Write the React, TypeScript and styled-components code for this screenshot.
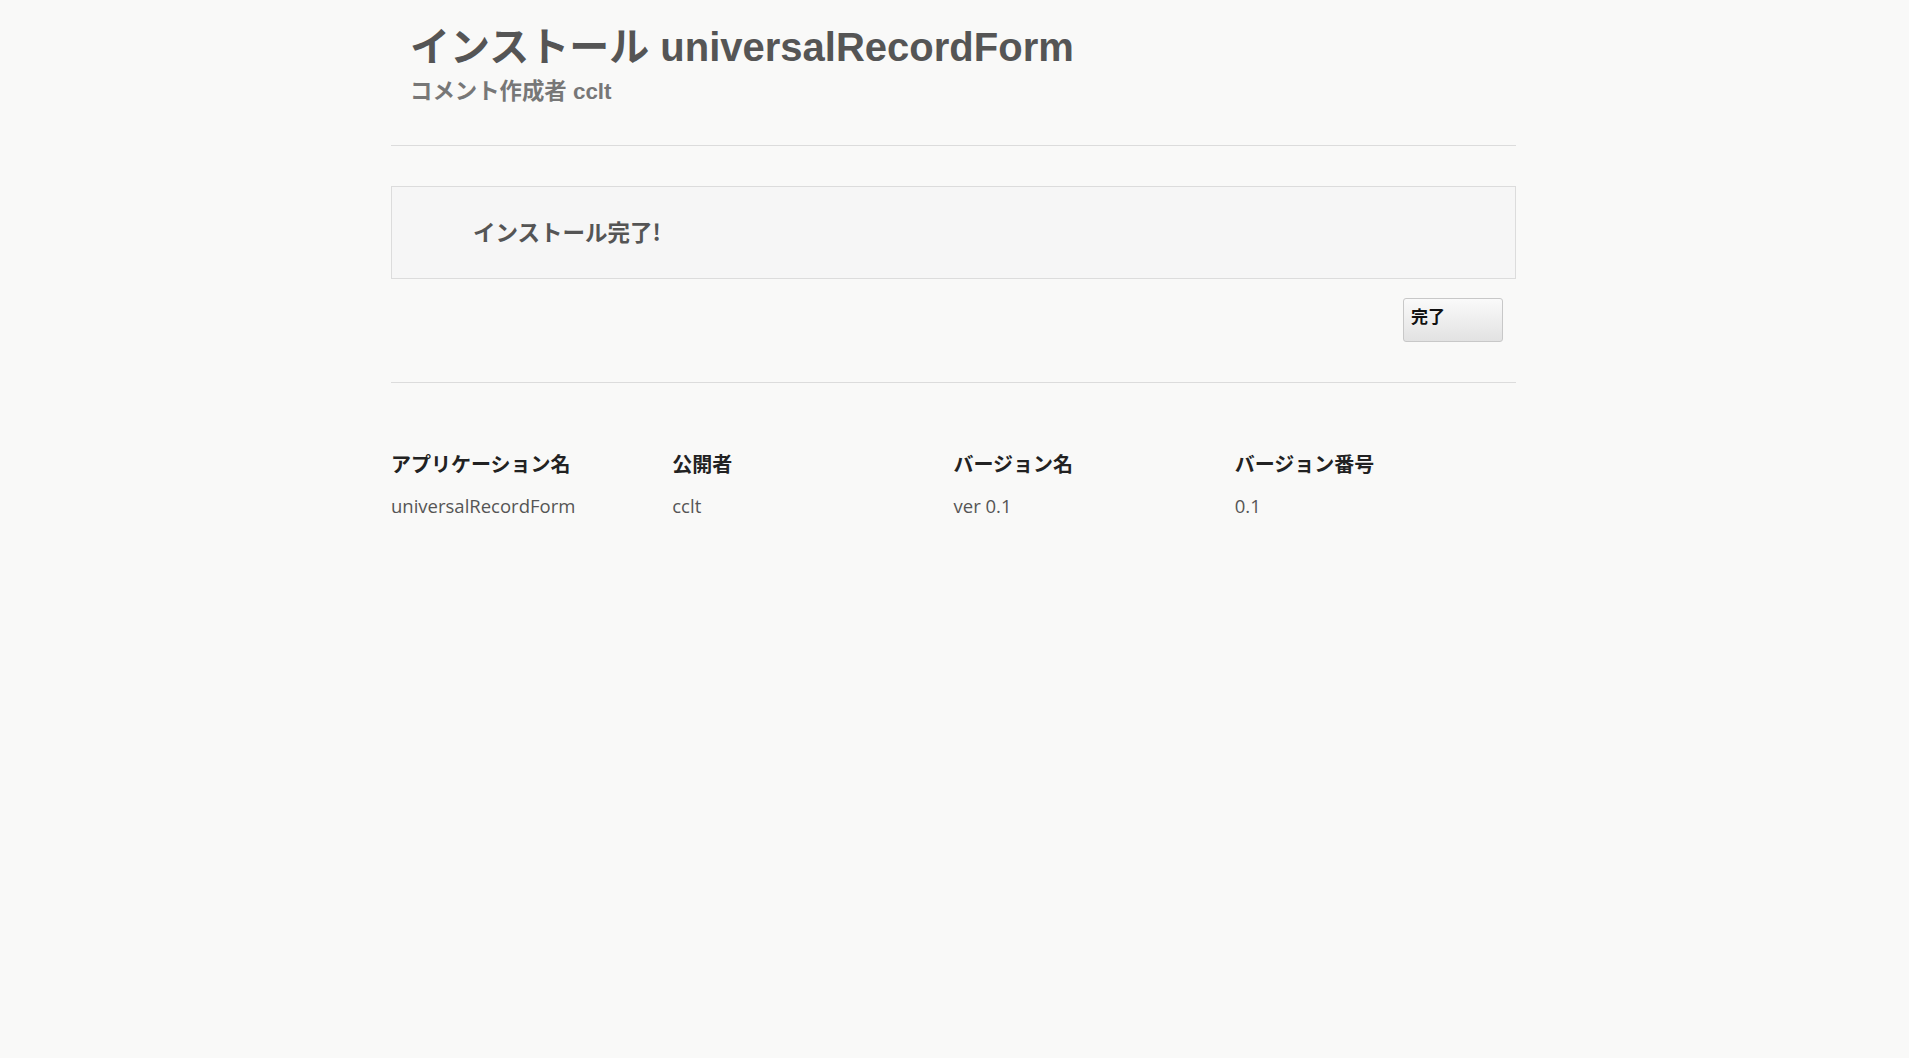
import styled, { createGlobalStyle } from 'styled-components';

const GlobalStyle = createGlobalStyle`
  html, body {
    margin: 0;
    padding: 0;
    background: #f9f9f8;
  }
  body {
    font-family: 'Liberation Sans', Arial, 'Noto Sans CJK JP', sans-serif;
    color: #555;
  }
`;

const columns = [
  { label: 'アプリケーション名', value: 'universalRecordForm' },
  { label: '公開者', value: 'cclt' },
  { label: 'バージョン名', value: 'ver 0.1' },
  { label: 'バージョン番号', value: '0.1' },
];

const App = () => {
  return (
    <Page>
      <GlobalStyle />
      <Container>
        <Header>
          <Title>インストール universalRecordForm</Title>
          <Subtitle>コメント作成者 cclt</Subtitle>
        </Header>
        <Rule />
        <Notice>
          <NoticeText>インストール完了!</NoticeText>
        </Notice>
        <Actions>
          <DoneButton>完了</DoneButton>
        </Actions>
        <Rule />
        <InfoTable>
          {columns.map(col => (
            <Column key={col.label}>
              <ColumnLabel>{col.label}</ColumnLabel>
              <ColumnValue>{col.value}</ColumnValue>
            </Column>
          ))}
        </InfoTable>
      </Container>
    </Page>
  );
};

const Page = styled.div`
  min-height: 1058px;
  background: #f9f9f8;
  padding-right: 2px;
`;

const Container = styled.div`
  width: 1125px;
  margin: 0 auto;
  display: flex;
  flex-direction: column;
`;

const Header = styled.div`
  padding: 23px 19px 0;
  height: 145px;
  box-sizing: border-box;
  display: flex;
  flex-direction: column;
`;

const Title = styled.h1`
  margin: 0;
  font-size: 40px;
  line-height: 48px;
  font-weight: bold;
  color: #555;
  font-family: 'Liberation Sans', Arial, 'Noto Sans CJK JP', sans-serif;
`;

const Subtitle = styled.div`
  margin-top: 6px;
  font-size: 22.4px;
  line-height: 30px;
  font-weight: bold;
  color: #777;
`;

const Rule = styled.hr`
  margin: 0;
  border: 0;
  border-top: 1px solid #dcdcdc;
  width: 100%;
`;

const Notice = styled.div`
  margin-top: 40px;
  height: 93px;
  box-sizing: border-box;
  border: 1px solid #dcdcdc;
  background: #f6f6f6;
  display: flex;
  align-items: center;
  padding: 0 0 4px 81px;
`;

const NoticeText = styled.div`
  font-size: 22.5px;
  font-weight: bold;
  color: #555;
  font-family: 'Noto Sans CJK JP', sans-serif;
`;

const Actions = styled.div`
  display: flex;
  justify-content: flex-end;
  padding: 19px 13px 40px 0;
`;

const DoneButton = styled.button`
  width: 100px;
  height: 44px;
  box-sizing: border-box;
  border: 1px solid #c8c8c8;
  border-radius: 3px;
  background: linear-gradient(to bottom, #fafafa, #e2e2e2);
  text-align: left;
  padding: 0 7px 10px;
  font-size: 17px;
  font-weight: bold;
  color: #111;
  font-family: 'Noto Sans CJK JP', sans-serif;
  cursor: pointer;
`;

const InfoTable = styled.div`
  display: grid;
  grid-template-columns: repeat(4, 1fr);
  padding-top: 67px;
`;

const Column = styled.div`
  display: flex;
  flex-direction: column;
  gap: 14px;
`;

const ColumnLabel = styled.div`
  font-size: 20px;
  font-weight: bold;
  color: #222;
  font-family: 'Noto Sans CJK JP', sans-serif;
  line-height: 28px;
`;

const ColumnValue = styled.div`
  font-size: 18.5px;
  color: #555;
  font-family: 'Open Sans', 'Noto Sans CJK JP', sans-serif;
  line-height: 28px;
`;

export default App;
